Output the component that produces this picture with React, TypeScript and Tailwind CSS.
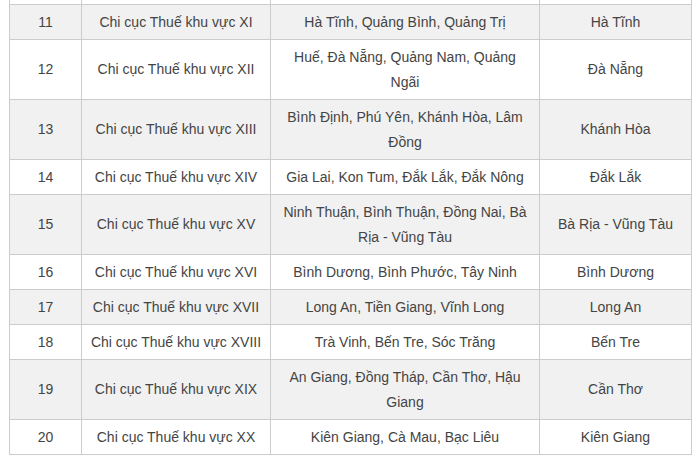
const rows = [
  ['11', 'Chi cục Thuế khu vực XI', 'Hà Tĩnh, Quảng Bình, Quảng Trị', 'Hà Tĩnh'],
  ['12', 'Chi cục Thuế khu vực XII', 'Huế, Đà Nẵng, Quảng Nam, Quảng Ngãi', 'Đà Nẵng'],
  ['13', 'Chi cục Thuế khu vực XIII', 'Bình Định, Phú Yên, Khánh Hòa, Lâm Đồng', 'Khánh Hòa'],
  ['14', 'Chi cục Thuế khu vực XIV', 'Gia Lai, Kon Tum, Đắk Lắk, Đắk Nông', 'Đắk Lắk'],
  ['15', 'Chi cục Thuế khu vực XV', 'Ninh Thuận, Bình Thuận, Đồng Nai, Bà Rịa - Vũng Tàu', 'Bà Rịa - Vũng Tàu'],
  ['16', 'Chi cục Thuế khu vực XVI', 'Bình Dương, Bình Phước, Tây Ninh', 'Bình Dương'],
  ['17', 'Chi cục Thuế khu vực XVII', 'Long An, Tiền Giang, Vĩnh Long', 'Long An'],
  ['18', 'Chi cục Thuế khu vực XVIII', 'Trà Vinh, Bến Tre, Sóc Trăng', 'Bến Tre'],
  ['19', 'Chi cục Thuế khu vực XIX', 'An Giang, Đồng Tháp, Cần Thơ, Hậu Giang', 'Cần Thơ'],
  ['20', 'Chi cục Thuế khu vực XX', 'Kiên Giang, Cà Mau, Bạc Liêu', 'Kiên Giang'],
];

export default function App() {
  return (
    <div className="w-[699px] h-[463px] bg-white overflow-hidden pl-[9px] font-['Liberation_Sans',Arial,sans-serif] text-[14px] text-[#444]">
      <table className="table-fixed border-collapse w-[682px]">
        <colgroup>
          <col className="w-[72px]" />
          <col className="w-[189px]" />
          <col className="w-[269px]" />
          <col className="w-[152px]" />
        </colgroup>
        <tbody>
          <tr>
            {[0, 1, 2, 3].map((i) => (
              <td key={i} className="h-[4px] p-0 border-x border-[#cccccc]" />
            ))}
          </tr>
          {rows.map((row, i) => (
            <tr key={row[0]} className={i % 2 === 0 ? 'bg-[#f1f1f1]' : 'bg-white'}>
              {row.map((cell, j) => (
                <td
                  key={j}
                  className={`border border-[#cccccc] text-center align-middle leading-[25px] pt-[5px] pb-[4px] ${j === 2 ? 'px-[10px]' : 'px-[6px]'}`}
                >
                  {cell}
                </td>
              ))}
            </tr>
          ))}
        </tbody>
      </table>
    </div>
  );
}
